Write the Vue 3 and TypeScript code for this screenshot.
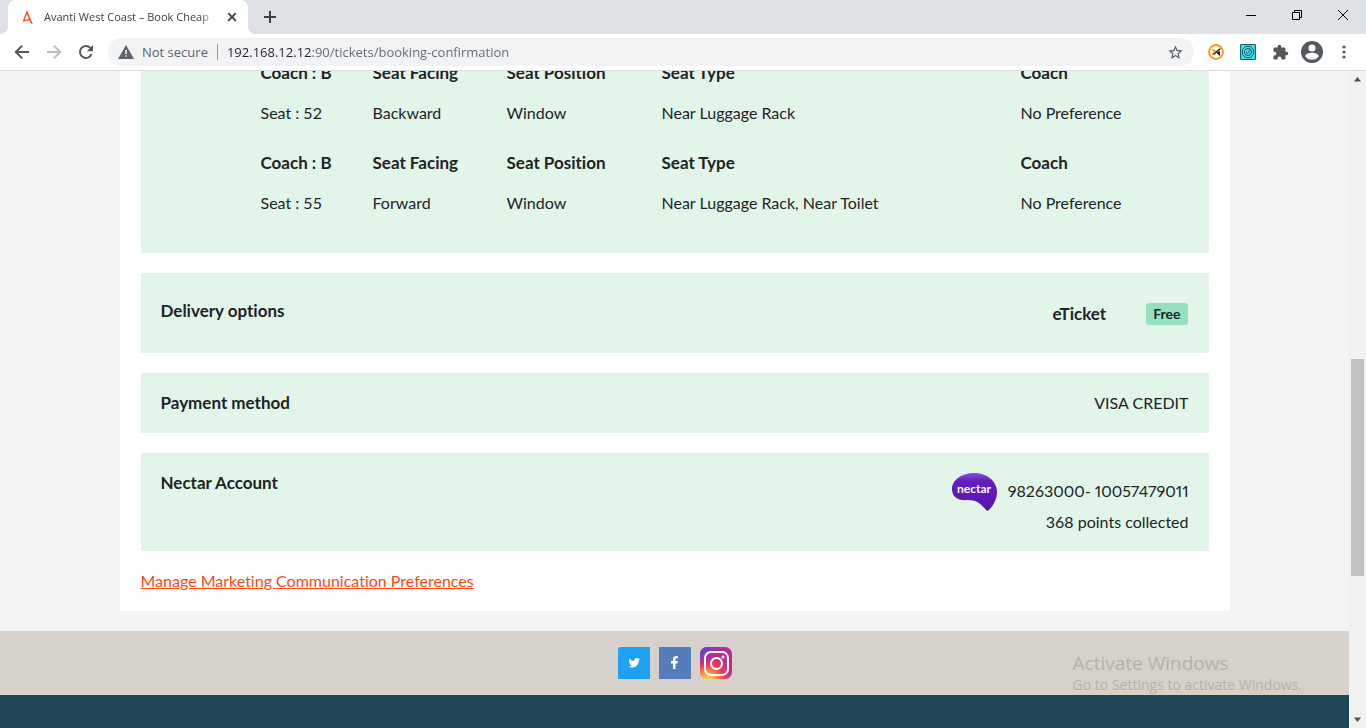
<script setup lang="ts">
import { ref } from 'vue'

interface Seat {
  coach: string
  seat: number
  facing: string
  position: string
  type: string
  preference: string
}

const url = ref('192.168.12.12:90/tickets/booking-confirmation')

const seats: Seat[] = [
  { coach: 'B', seat: 52, facing: 'Backward', position: 'Window', type: 'Near Luggage Rack', preference: 'No Preference' },
  { coach: 'B', seat: 55, facing: 'Forward', position: 'Window', type: 'Near Luggage Rack, Near Toilet', preference: 'No Preference' },
]
</script>

<template>
  <div class="browser">
    <header class="tabstrip">
      <div class="tab">
        <svg class="favicon" viewBox="0 0 16 16" width="16" height="16" aria-hidden="true">
          <path d="M7 1 2.600 12.800 10.200 11.200 10 9.800 4.800 10.900 7 5 10.600 14 12.900 15.600z" fill="#ff4713" />
        </svg>
        <span class="tab-title">Avanti West Coast – Book Cheap</span>
        <button class="icon-btn tab-close" type="button" aria-label="Close tab">
          <svg viewBox="0 0 10 10" width="10" height="10"><path d="M1.2 1.2 8.8 8.8M8.8 1.2 1.2 8.8" stroke="#3c4043" stroke-width="1.8" /></svg>
        </button>
      </div>
      <button class="icon-btn new-tab" type="button" aria-label="New tab">
        <svg viewBox="0 0 12 12" width="12" height="12"><path d="M6 0v12M0 6h12" stroke="#3c4043" stroke-width="2" /></svg>
      </button>
      <div class="window-controls">
        <button class="icon-btn" type="button" aria-label="Minimize">
          <svg viewBox="0 0 10 10" width="10" height="10"><path d="M0 5.5h10" stroke="#000" /></svg>
        </button>
        <button class="icon-btn" type="button" aria-label="Restore">
          <svg viewBox="0 0 10 10" width="10" height="10"><path d="M.5 2.5h7v7h-7zM2.5 2.5v-2h7v7h-2" fill="none" stroke="#000" /></svg>
        </button>
        <button class="icon-btn" type="button" aria-label="Close window">
          <svg viewBox="0 0 10 10" width="10" height="10"><path d="M0 0 10 10M10 0 0 10" stroke="#000" /></svg>
        </button>
      </div>
    </header>

    <div class="toolbar">
      <button class="icon-btn" type="button" aria-label="Back">
        <svg viewBox="0 0 16 16" width="16" height="16"><path d="M15 8H2M8.2 1.6 1.8 8l6.4 6.4" fill="none" stroke="#54585c" stroke-width="2" /></svg>
      </button>
      <button class="icon-btn" type="button" aria-label="Forward">
        <svg viewBox="0 0 16 16" width="16" height="16"><path d="M1 8h13M7.8 1.6 14.2 8l-6.4 6.4" fill="none" stroke="#b9bbbd" stroke-width="2" /></svg>
      </button>
      <button class="icon-btn" type="button" aria-label="Reload">
        <svg viewBox="0 0 16 16" width="16" height="16"><path d="M13.6 10A6 6 0 1 1 12.4 3.9" fill="none" stroke="#54585c" stroke-width="2" /><path d="M15 1v6.2H8.8z" fill="#54585c" /></svg>
      </button>
      <div class="omnibox">
        <svg class="warn" viewBox="0 0 16 14" width="16" height="14" aria-hidden="true">
          <path d="M8 0 16 14H0z" fill="#5f6368" /><path d="M7.2 5h1.6v4H7.2zM7.2 10.2h1.6v1.6H7.2z" fill="#f1f3f4" />
        </svg>
        <label class="secure" for="address">Not secure</label>
        <input id="address" v-model="url" class="address" type="text" spellcheck="false" />
        <button class="icon-btn" type="button" aria-label="Bookmark this page">
          <svg viewBox="0 0 24 24" width="17" height="17"><path d="m22 9.24-7.19-.62L12 2 9.19 8.63 2 9.24l5.46 4.73L5.82 21 12 17.27 18.18 21l-1.63-7.03zM12 15.4l-3.76 2.27 1-4.28-3.32-2.88 4.38-.38L12 6.1l1.71 4.04 4.38.38-3.32 2.88 1 4.28z" fill="#54585c" /></svg>
        </button>
      </div>
      <div class="extensions">
        <button class="icon-btn" type="button" aria-label="Performance extension">
          <svg viewBox="0 0 16 16" width="16" height="16">
            <circle cx="8" cy="8" r="7" fill="#fff" stroke="#fb9a1c" stroke-width="1.9" />
            <path d="M4 5.200 7.500 7.500 4.200 11M8 7.800l3.500-2.600" fill="none" stroke="#fb9a1c" stroke-width="1.800" />
            <path d="M12.500 4.500 5.500 10.500M9 8.500l3 3" fill="none" stroke="#222" stroke-width="1.200" /><path d="M9 8.500 12 7v4.500z" fill="#222" />
          </svg>
        </button>
        <button class="icon-btn" type="button" aria-label="Inspector extension">
          <svg viewBox="0 0 16 16" width="16" height="16">
            <path d="M.5.5h15v15H.5z" fill="#3fdce9" stroke="#17616b" />
            <path d="M5.6 2.4h4.8l3.2 3.2v4.8l-3.2 3.2H5.6l-3.2-3.2V5.6z" fill="none" stroke="#145963" />
            <circle cx="8" cy="8" r="3.6" fill="none" stroke="#145963" /><path d="m6 8 1.5 1.5L10.2 6" fill="none" stroke="#145963" />
          </svg>
        </button>
        <button class="icon-btn" type="button" aria-label="Extensions">
          <svg viewBox="0 0 24 24" width="17" height="17"><path d="M20.5 11H19V7a2 2 0 0 0-2-2h-4V3.5a2.5 2.5 0 0 0-5 0V5H4a2 2 0 0 0-2 2v3.8h1.5a2.7 2.7 0 0 1 0 5.4H2V20a2 2 0 0 0 2 2h3.8v-1.500a2.700 2.700 0 0 1 5.400 0V22H17a2 2 0 0 0 2-2v-4h1.500a2.500 2.500 0 0 0 0-5z" fill="#54585c" /></svg>
        </button>
        <button class="icon-btn" type="button" aria-label="Profile">
          <svg viewBox="0 0 22 22" width="22" height="22"><circle cx="11" cy="11" r="11" fill="#54585f" /><circle cx="11" cy="7" r="3.500" fill="#fff" /><path d="M4.200 15.200c0-2.400 4.500-3.500 6.800-3.500s6.800 1.100 6.800 3.500A8.200 8.200 0 0 1 11 18.800a8.200 8.200 0 0 1-6.800-3.600z" fill="#fff" /></svg>
        </button>
        <button class="icon-btn" type="button" aria-label="Menu">
          <svg viewBox="0 0 4 14" width="4" height="14"><g fill="#54585c"><circle cx="2" cy="2" r="1.600" /><circle cx="2" cy="7" r="1.600" /><circle cx="2" cy="12" r="1.600" /></g></svg>
        </button>
      </div>
    </div>

    <div class="viewport">
      <div class="page">
        <main class="sheet">
          <section class="panel seats">
            <table>
              <colgroup><col class="c-coach" /><col class="c-facing" /><col class="c-position" /><col /><col class="c-pref" /></colgroup>
              <tbody v-for="s in seats" :key="s.seat">
                <tr>
                  <th scope="col">Coach : {{ s.coach }}</th>
                  <th scope="col">Seat Facing</th>
                  <th scope="col">Seat Position</th>
                  <th scope="col">Seat Type</th>
                  <th scope="col">Coach</th>
                </tr>
                <tr>
                  <td>Seat : {{ s.seat }}</td>
                  <td>{{ s.facing }}</td>
                  <td>{{ s.position }}</td>
                  <td>{{ s.type }}</td>
                  <td>{{ s.preference }}</td>
                </tr>
              </tbody>
            </table>
          </section>

          <section class="panel delivery">
            <h2>Delivery options</h2>
            <div class="delivery-choice"><strong>eTicket</strong><span class="badge">Free</span></div>
          </section>

          <section class="panel">
            <h2>Payment method</h2>
            <span>VISA CREDIT</span>
          </section>

          <section class="panel nectar">
            <h2>Nectar Account</h2>
            <div class="nectar-info">
              <div class="nectar-number">
                <svg viewBox="0 0 45 38" width="45" height="38" role="img" aria-label="nectar">
                  <defs>
                    <linearGradient id="nectar-fill" x1="0" y1="0" x2="0" y2="1"><stop offset="0" stop-color="#8a55d4" /><stop offset=".2" stop-color="#661fc0" /><stop offset="1" stop-color="#5a12ad" /></linearGradient>
                  </defs>
                  <path d="M22 0C35 0 45 8 45 19c0 7-4 14-8 18-1 1-2 1-3 0-5-6-9-10-18-10C6 28 0 24 0 16 0 7 10 0 22 0z" fill="url(#nectar-fill)" />
                  <text x="22" y="20" text-anchor="middle" class="nectar-word">nectar</text>
                </svg>
                <span>98263000- 10057479011</span>
              </div>
              <p>368 points collected</p>
            </div>
          </section>

          <a class="preferences" href="#preferences">Manage Marketing Communication Preferences</a>
        </main>

        <footer class="footer">
          <nav class="social">
            <a href="#twitter" aria-label="Twitter">
              <svg viewBox="0 0 32 32" width="32" height="32"><path d="M3 0h29v32H0V3a3 3 0 0 1 3-3z" fill="#1da1f2" /><path transform="translate(10.500 10) scale(.48)" d="M23.950 4.570a10 10 0 0 1-2.820.770 4.960 4.960 0 0 0 2.160-2.720c-.950.560-2 .960-3.130 1.180a4.920 4.920 0 0 0-8.380 4.490C7.690 8.100 4.070 6.130 1.640 3.160a4.920 4.920 0 0 0 1.520 6.570 4.900 4.900 0 0 1-2.230-.620v.060a4.920 4.920 0 0 0 3.950 4.830 5 5 0 0 1-2.210.080 4.930 4.930 0 0 0 4.600 3.420A9.870 9.870 0 0 1 0 19.540a14 14 0 0 0 7.550 2.210c9.050 0 14-7.500 14-13.980v-.640a9.900 9.900 0 0 0 2.400-2.560z" fill="#fff" /></svg>
            </a>
            <a href="#facebook" aria-label="Facebook">
              <svg viewBox="0 0 32 32" width="32" height="32"><path d="M0 0h31l1 1v31H0z" fill="#557dbc" /><path d="M14 22v-5.500h-2V14h2v-1.600c0-2.200 1.300-3.300 3.200-3.300.8 0 1.400.1 1.700.1v2h-1.200c-.9 0-1.200.5-1.200 1.200V14h2.300l-.4 2.500h-1.900V22z" fill="#fff" /></svg>
            </a>
            <a href="#instagram" aria-label="Instagram">
              <svg viewBox="0 0 32 32" width="32" height="32">
                <defs>
                  <radialGradient id="ig-warm" cx=".25" cy="1.050" r="1"><stop offset="0" stop-color="#fed773" /><stop offset=".25" stop-color="#fb9b43" /><stop offset=".5" stop-color="#ee3a52" /><stop offset=".75" stop-color="#c92b85" /><stop offset="1" stop-color="#b32ba0" /></radialGradient>
                  <radialGradient id="ig-cool" cx=".05" cy="0" r=".65"><stop offset="0" stop-color="#4a4fd8" /><stop offset="1" stop-color="#7a32c8" stop-opacity="0" /></radialGradient>
                </defs>
                <rect width="32" height="32" rx="7" fill="url(#ig-warm)" /><rect width="32" height="32" rx="7" fill="url(#ig-cool)" />
                <rect x="5" y="5" width="23" height="23" rx="6" fill="none" stroke="#fff" stroke-width="2" /><circle cx="16.500" cy="16.500" r="5.500" fill="none" stroke="#fff" stroke-width="2" /><circle cx="23" cy="10" r="1.500" fill="#fff" />
              </svg>
            </a>
          </nav>
          <div class="footer-bottom"></div>
        </footer>
      </div>

      <div class="scrollbar" aria-hidden="true">
        <svg viewBox="0 0 17 17" width="17" height="17"><path d="M8.500 6 12 10.500H5z" fill="#505050" /></svg>
        <div class="track"><span class="before"></span><span class="thumb"></span><span class="after"></span></div>
        <svg viewBox="0 0 17 17" width="17" height="17"><path d="M5 6.500h7L8.500 11z" fill="#505050" /></svg>
      </div>
    </div>

    <div class="activation">
      <p class="activation-title">Activate Windows</p>
      <p class="activation-text">Go to Settings to activate Windows.</p>
    </div>
  </div>
</template>

<style>
html, body { margin: 0; overflow: hidden; }
</style>

<style scoped>
* { box-sizing: border-box; }
.browser { position: relative; display: flex; flex-direction: column; height: 100vh; overflow: hidden; font-family: "Noto Sans", sans-serif; background: #f4f4f4; }
svg { display: block; flex: none; }
.icon-btn { display: grid; place-items: center; flex: none; padding: 0; border: 0; background: transparent; }

.tabstrip { display: flex; height: 34px; flex: none; background: #dee1e6; padding-left: 8px; }
.tab { position: relative; display: flex; align-items: center; width: 240px; padding: 0 8px 0 12px; background: #fff; border-radius: 8px 8px 0 0; }
.tab::before, .tab::after { content: ""; position: absolute; bottom: 0; width: 8px; height: 8px; }
.tab::before { right: 100%; background: radial-gradient(circle at 0 0, transparent 8px, #fff 8px); }
.tab::after { left: 100%; background: radial-gradient(circle at 100% 0, transparent 8px, #fff 8px); }
.favicon { margin-right: 8px; }
.tab-title { flex: 1; overflow: hidden; white-space: nowrap; font-family: "Open Sans", sans-serif; font-size: 11px; line-height: 16px; color: #3c4043; mask-image: linear-gradient(to left, transparent, #000 16px); }
.tab-close { width: 16px; height: 16px; margin-left: 8px; }
.new-tab { width: 28px; margin-left: 8px; }
.window-controls { display: flex; margin-left: auto; height: 29px; }
.window-controls .icon-btn { width: 46px; }

.toolbar { display: flex; align-items: center; height: 37px; flex: none; padding: 0 6px 1px; background: linear-gradient(#fff 36px, #dadce0 36px); }
.toolbar > .icon-btn { width: 32px; height: 32px; }
.omnibox { display: flex; align-items: center; flex: 1; height: 28px; margin-left: 6px; padding: 0 10px; border-radius: 14px; background: #f1f3f4; }
.warn { margin-right: 8px; }
.secure { font-family: "Open Sans", sans-serif; font-size: 13px; line-height: 16px; color: #5f6368; padding-right: 9px; border-right: 1px solid #9a9da0; }
.address { flex: 1; min-width: 0; padding: 0 0 0 9px; border: 0; outline: 0; height: 24px; font-family: "Open Sans", sans-serif; font-size: 13px; color: transparent; background: linear-gradient(to right, #202124 94px, #63676b 94px); background-clip: text; }
.extensions { display: flex; align-items: center; margin-left: 6px; }
.extensions .icon-btn { width: 32px; height: 28px; }

.viewport { display: flex; flex: 1; min-height: 0; overflow: hidden; }
.page { display: flex; flex-direction: column; flex: 1; min-width: 0; overflow: hidden; }
.sheet { width: 100%; max-width: 1110px; margin: -8px auto 20px; padding: 0 21px 20px; background: #fff; font-family: Lato, sans-serif; font-size: 16px; line-height: 20px; font-variant-ligatures: none; color: #1d2426; }
.panel { display: flex; justify-content: space-between; padding: 20px; margin-bottom: 20px; background: #e1f5e8; }
.seats { padding: 0 20px 10px 120px; }
table { width: 100%; table-layout: fixed; border-collapse: collapse; }
.c-coach { width: 112px; }
.c-facing { width: 134px; }
.c-position { width: 155px; }
.c-pref { width: 168px; }
th, td { padding: 0 0 20px; text-align: left; vertical-align: top; }
td { padding-bottom: 30px; }
p { margin: 0; }
h2, th, strong { margin: 0; font-size: 17px; line-height: 20px; font-weight: 700; }
.delivery { padding-top: 28px; padding-bottom: 28px; }
.delivery-choice { display: flex; align-items: center; gap: 40px; padding: 2px 1px 0 0; }
.badge { padding: 0 7px; border-radius: 3px; background: #93e1bf; font-size: 14px; line-height: 22px; font-weight: 700; }
.nectar { padding-bottom: 19px; }
.nectar-info { display: flex; flex-direction: column; align-items: flex-end; gap: 1px; }
.nectar-number { display: flex; align-items: center; gap: 11px; font-variant-numeric: proportional-nums; }
.nectar-number span { padding-bottom: 2px; }
.nectar-word { font: 700 12px Lato, sans-serif; fill: #fff; }
.preferences { color: #ff4713; display: inline-block; }

.footer { display: flex; flex-direction: column; flex: 1; }
.social { display: flex; justify-content: center; gap: 9px; padding: 16px; background: #d6d1ca; }
.footer-bottom { flex: 1; background: #204656; }

.scrollbar { display: flex; flex-direction: column; width: 17px; background: #f1f1f1; }
.track { display: flex; flex-direction: column; flex: 1; padding: 0 2px; }
.before { flex: 271; }
.thumb { flex: 217; background: #c1c1c1; }
.after { flex: 135; }

.activation { position: absolute; right: 64px; bottom: 33px; color: #b4b1ad; font-family: "Open Sans", sans-serif; }
.activation-title { font-size: 19px; line-height: 24px; }
.activation-text { font-size: 14px; line-height: 20px; }
</style>
